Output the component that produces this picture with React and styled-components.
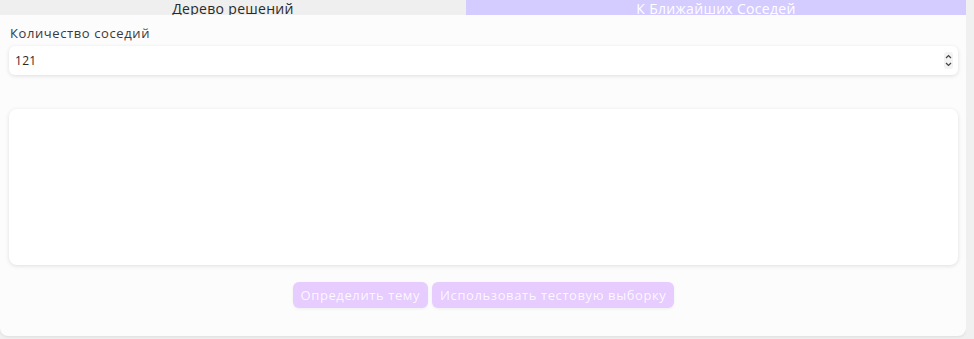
import React, { useState } from "react";
import styled, { createGlobalStyle } from "styled-components";

const GlobalStyle = createGlobalStyle`
  html, body {
    margin: 0;
    padding: 0;
    background: #f0f0f0;
    font-family: "Open Sans", "Noto Sans", sans-serif;
  }
`;

const Page = styled.div`
  width: 966px;
  height: 339px;
  overflow: hidden;
`;

const TabBar = styled.div`
  display: flex;
  height: 15px;
  overflow: hidden;
`;

const Tab = styled.div`
  flex: ${(p) => (p.active ? "0 0 500px" : "0 0 466px")};
  display: flex;
  justify-content: center;
  align-items: flex-end;
  background-color: ${(p) => (p.active ? "#d4ccff" : "#efefef")};
  color: ${(p) => (p.active ? "#ffffff" : "#2a2a2a")};
  font-size: 14px;
  letter-spacing: 0.3px;
  line-height: 13px;
  cursor: pointer;
`;

const Card = styled.div`
  display: flex;
  flex-direction: column;
  height: 321px;
  background: #fcfcfc;
  border-radius: 0 0 8px 8px;
  box-shadow: 0 1px 3px rgba(0, 0, 0, 0.08);
  padding: 9px 8px 0 9px;
  box-sizing: border-box;
`;

const Label = styled.label`
  font-size: 13px;
  letter-spacing: 0.6px;
  color: #3a3a3a;
  line-height: 18px;
  padding-left: 1px;
  margin-bottom: 4px;
`;

const InputWrap = styled.div`
  position: relative;
  display: flex;
`;

const NumberInput = styled.input`
  flex: 1;
  height: 29px;
  box-sizing: border-box;
  border: none;
  border-radius: 6px;
  background: #ffffff;
  box-shadow: 0 1px 4px rgba(0, 0, 0, 0.12);
  padding: 0 6px;
  font-family: inherit;
  font-size: 12px;
  letter-spacing: 0.3px;
  color: #2a2a2a;
  outline: none;
  -moz-appearance: textfield;

  &::-webkit-inner-spin-button,
  &::-webkit-outer-spin-button {
    -webkit-appearance: none;
    margin: 0;
  }
`;

const Spinner = styled.div`
  position: absolute;
  right: 5px;
  top: 6px;
  width: 9px;
  height: 17px;
  display: flex;
  flex-direction: column;
  border-radius: 3px;
  background: #f3f3f3;
  overflow: hidden;
`;

const SpinHalf = styled.div`
  flex: 1;
  display: flex;
  align-items: center;
  justify-content: center;
`;

const TextArea = styled.textarea`
  margin-top: 34px;
  height: 156px;
  box-sizing: border-box;
  border: none;
  border-radius: 8px;
  background: #ffffff;
  box-shadow: 0 1px 4px rgba(0, 0, 0, 0.12);
  resize: none;
  padding: 8px;
  font-family: inherit;
  font-size: 12px;
  outline: none;
`;

const Actions = styled.div`
  display: flex;
  justify-content: center;
  gap: 4px;
  margin-top: 17px;
`;

const Button = styled.button`
  height: 26px;
  padding: 0 8px;
  border: none;
  border-radius: 6px;
  background: #e6ccff;
  color: rgba(255, 255, 255, 0.88);
  font-family: inherit;
  font-size: 13px;
  letter-spacing: 0.6px;
  box-shadow: 0 1px 3px rgba(0, 0, 0, 0.06);
  cursor: pointer;
`;

const Chevron = ({ up }) => (
  <svg width="7" height="5" viewBox="0 0 7 5">
    <path
      d={up ? "M1 4 L3.5 1.5 L6 4" : "M1 1 L3.5 3.5 L6 1"}
      fill="none"
      stroke="#444"
      strokeWidth="1.2"
    />
  </svg>
);

export default function App() {
  const [neighbors, setNeighbors] = useState(121);
  const [text, setText] = useState("");

  return (
    <>
      <GlobalStyle />
      <Page>
        <TabBar>
          <Tab>Дерево решений</Tab>
          <Tab active>К Ближайших Соседей</Tab>
        </TabBar>
        <Card>
          <Label>Количество соседий</Label>
          <InputWrap>
            <NumberInput
              type="number"
              value={neighbors}
              onChange={(e) => setNeighbors(e.target.value)}
            />
            <Spinner>
              <SpinHalf onClick={() => setNeighbors(Number(neighbors) + 1)}>
                <Chevron up />
              </SpinHalf>
              <SpinHalf onClick={() => setNeighbors(Number(neighbors) - 1)}>
                <Chevron />
              </SpinHalf>
            </Spinner>
          </InputWrap>
          <TextArea value={text} onChange={(e) => setText(e.target.value)} />
          <Actions>
            <Button>Определить тему</Button>
            <Button>Использовать тестовую выборку</Button>
          </Actions>
        </Card>
      </Page>
    </>
  );
}
